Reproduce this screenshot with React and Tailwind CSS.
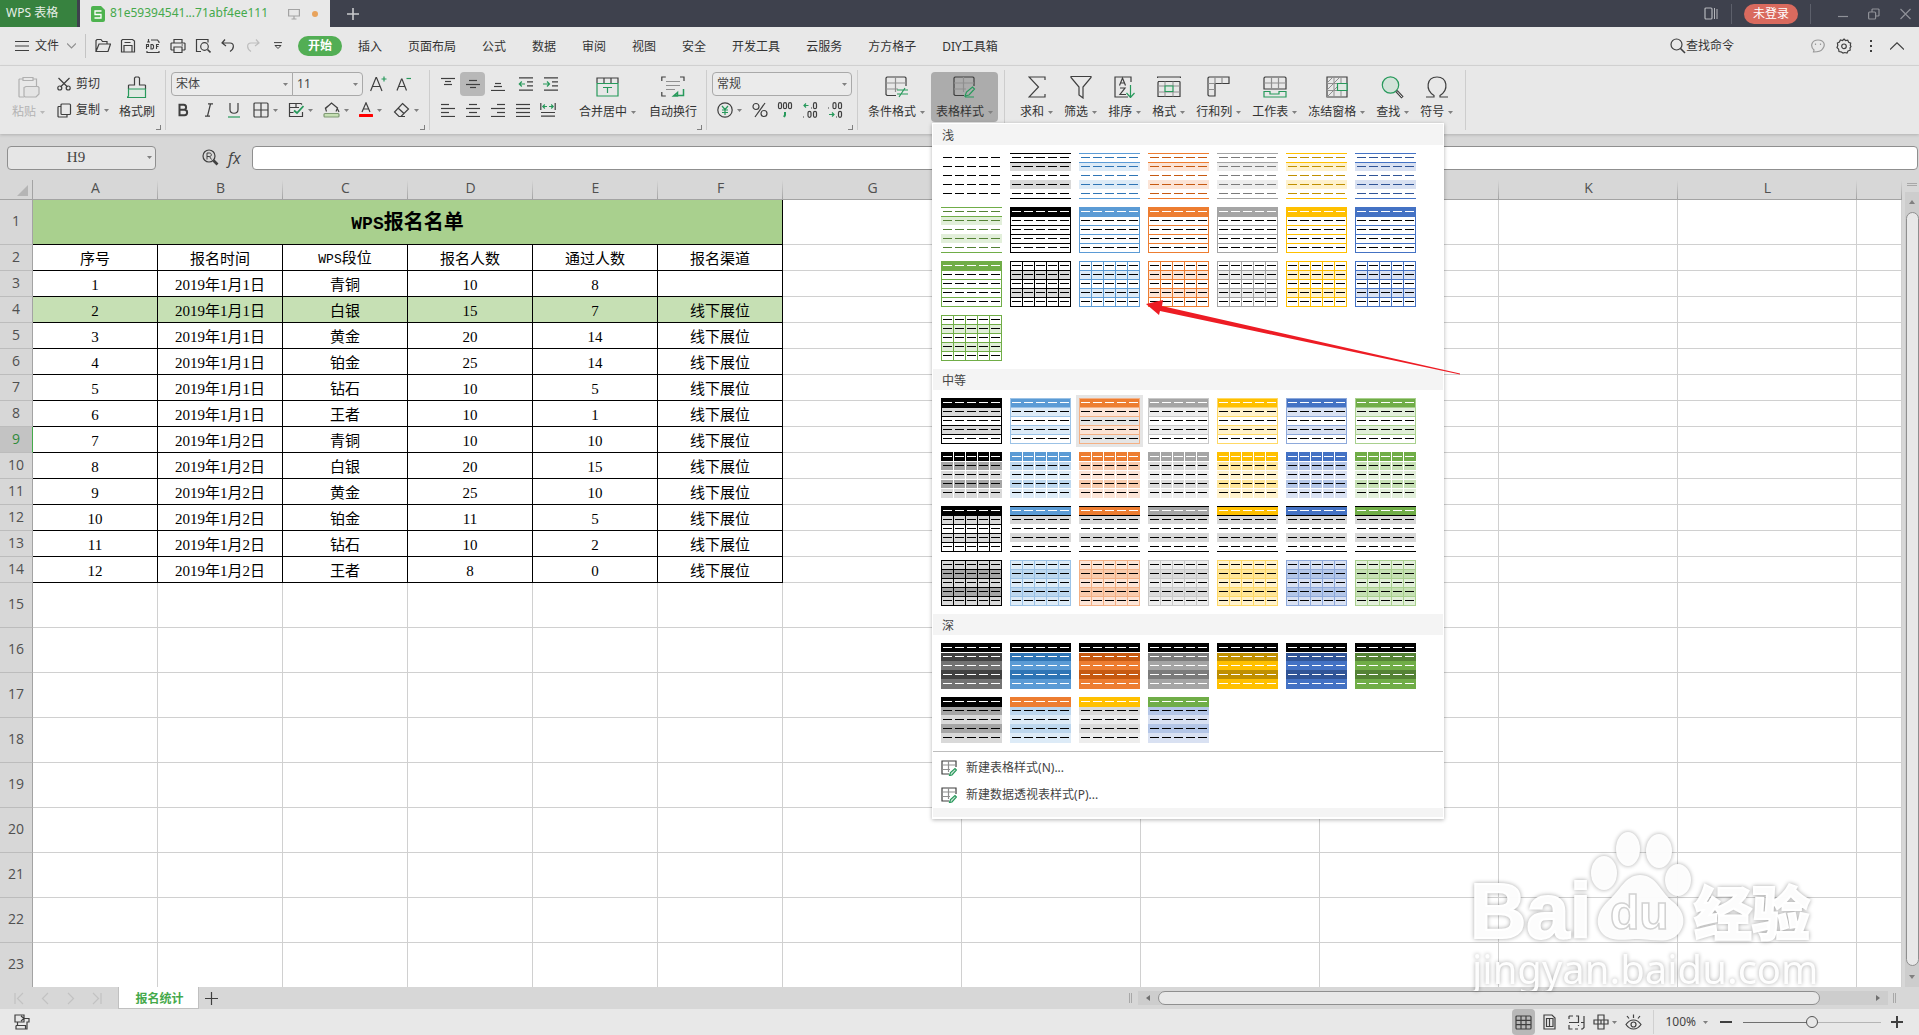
import { Fragment } from "react";

/* ─────────────────────────────────────────────
   DATA
───────────────────────────────────────────── */
const MENUS = ["插入", "页面布局", "公式", "数据", "审阅", "视图", "安全", "开发工具", "云服务", "方方格子", "DIY工具箱"];

const COLUMNS = ["A", "B", "C", "D", "E", "F", "G", "H", "I", "J", "K", "L", ""];

const LEVELS = ["青铜", "白银", "黄金", "铂金", "钻石", "王者"];
const SIGNED = [10, 15, 20, 25, 10, 10, 10, 20, 25, 11, 10, 8];
const PASSED = [8, 7, 14, 14, 5, 1, 10, 15, 10, 5, 2, 0];

const ENTRIES = SIGNED.map((signed, i) => [
  i + 1,
  i < 6 ? "2019年1月1日" : "2019年1月2日",
  LEVELS[i % 6],
  signed,
  PASSED[i],
  i === 0 ? "" : "线下展位",
]);

const EMPTY_ROWS = [15, 16, 17, 18, 19, 20, 21, 22, 23];

// Theme colours, each with its tints for the style gallery
const BLACK = { base: "#000000", light: "#d9d9d9", mid: "#a6a6a6", line: "#000000", dark: "#000000" };
const BLUE = { base: "#5b9bd5", light: "#ddebf7", mid: "#bdd7ee", line: "#9bc2e6", dark: "#2f75b5" };
const ORANGE = { base: "#ed7d31", light: "#fce4d6", mid: "#f8cbad", line: "#f4b084", dark: "#c65911" };
const GRAY = { base: "#a5a5a5", light: "#ededed", mid: "#dbdbdb", line: "#c9c9c9", dark: "#7b7b7b" };
const GOLD = { base: "#ffc000", light: "#fff2cc", mid: "#ffe699", line: "#ffd966", dark: "#bf8f00" };
const INDIGO = { base: "#4472c4", light: "#d9e1f2", mid: "#b4c6e7", line: "#8ea9db", dark: "#305496" };
const GREEN = { base: "#70ad47", light: "#e2efda", mid: "#c6e0b4", line: "#a9d08e", dark: "#548235" };
const THEME = [BLACK, BLUE, ORANGE, GRAY, GOLD, INDIGO, GREEN];

const N = "none";
const INNER = [9, 18, 27, 36];

const lightStyles = [
  { fills: [N, N, N, N, N], dash: "#000" },
  ...THEME.map((c) => ({ fills: [N, c.light, N, c.light, N], lines: [0, 9, 45], line: c.base, dash: c.dark })),
  ...THEME.map((c) => ({ fills: [c.base, N, N, N, N], lines: INNER, line: c.base, box: true, head: "#fff" })),
  ...THEME.map((c) => ({ fills: [N, c.light, N, c.light, N], lines: INNER, line: c.base, box: true, grid: true })),
];

const mediumStyles = [
  ...THEME.map((c) => ({
    fills: [c.base, c.light, N, c.light, N], lines: INNER, line: c.line, box: true, head: "#fff", active: c === ORANGE,
  })),
  ...THEME.map((c) => ({ fills: [c.base, c.mid, c.light, c.mid, c.light], lines: INNER, line: "#fff", grid: true, head: "#fff" })),
  { fills: ["#000", "#d9d9d9", N, "#d9d9d9", N], lines: INNER, line: "#000", box: true, grid: true, head: "#fff" },
  ...THEME.slice(1).map((c) => ({ fills: [c.base, "#d9d9d9", N, "#d9d9d9", N], lines: [0, 9, 45], line: "#000", head: "#fff" })),
  ...THEME.map((c) => ({ fills: [c.light, c.mid, c.light, c.mid, c.light], lines: INNER, line: c.line, box: true, grid: true })),
];

const darkStyles = [
  { fills: ["#000", "#404040", "#737373", "#404040", "#737373"], lines: [9], line: "#fff", head: "#fff", dash: "#fff" },
  ...THEME.slice(1).map((c) => ({
    fills: ["#000", c.dark, c.base, c.dark, c.base], lines: [9], line: "#fff", head: "#fff", dash: "#fff",
  })),
  ...[[BLACK, BLACK], [ORANGE, BLUE], [GOLD, GRAY], [GREEN, INDIGO]].map(([h, c]) => ({
    fills: [h.base, c.mid, c.light, c.mid, c.light], lines: [9], line: h.base, head: "#fff",
  })),
];

/* ─────────────────────────────────────────────
   SMALL SHARED PIECES
───────────────────────────────────────────── */
function Ico({ w = 16, h = 16, children, color = "#3f3f3f" }) {
  return (
    <svg width={w} height={h} viewBox={`0 0 ${w} ${h}`} fill="none" stroke={color} strokeWidth="1.2" className="shrink-0" aria-hidden="true">
      {children}
    </svg>
  );
}

function Caret({ faded = false }) {
  return (
    <svg width="5" height="3" viewBox="0 0 5 3" className="shrink-0" aria-hidden="true">
      <path d="M0 0h5L2.5 3z" fill={faded ? "#b8b8b8" : "#808080"} />
    </svg>
  );
}

function Divider() {
  return <div className="my-1 w-px shrink-0 bg-[#cdcdcd]" />;
}

// Little "more options" angle in the corner of a ribbon group
function Corner({ label }) {
  return (
    <button aria-label={label} className="absolute bottom-1 right-1 h-[5px] w-[5px] border-b border-r border-[#808080]" />
  );
}

function BigButton({ icon, label, caret = true, faded = false }) {
  return (
    <button className={`flex shrink-0 flex-col items-center ${faded ? "text-[#b3b3b3]" : ""}`}>
      <span className="flex h-[30px] items-center">{icon}</span>
      <span className="flex h-5 items-center gap-1 whitespace-nowrap text-xs">
        {label}
        {caret && <Caret faded={faded} />}
      </span>
    </button>
  );
}

function IconButton({ label, children, active = false, wide = false }) {
  return (
    <button
      aria-label={label}
      className={`flex h-6 items-center justify-center gap-1 ${wide ? "w-[35px]" : "w-[25px]"} ${active ? "rounded bg-[#b8b8b8]" : ""}`}
    >
      {children}
      {wide && <Caret />}
    </button>
  );
}

/* ─────────────────────────────────────────────
   TITLE BAR
───────────────────────────────────────────── */
function TitleBar() {
  return (
    <header className="flex h-[27px] shrink-0 items-stretch bg-[#3e414d] text-xs">
      <button className="mr-[3px] w-[77px] shrink-0 bg-[#37823f] pb-px pl-1.5 text-left text-[#e6efe7]">WPS 表格</button>
      <div className="flex w-[250px] shrink-0 items-center bg-[#e8e8e8] pl-[11px] text-[#45a94b]">
        <svg width="14" height="16" viewBox="0 0 14 16" className="mr-[5px]" aria-hidden="true">
          <path d="M2 0h8l4 4v10a2 2 0 0 1-2 2H2a2 2 0 0 1-2-2V2a2 2 0 0 1 2-2z" fill="#4db34f" />
          <path d="M10.500 5H4v3.500h6V12H3.500" fill="none" stroke="#fff" strokeWidth="1.300" />
        </svg>
        <span className="w-[178px] pb-px">81e59394541...71abf4ee111</span>
        <Ico w={12} h={12} color="#a3a3a3">
          <path d="M.6 1.500h10.800v6.500H.6zM6 8v3M3.500 11h5" />
        </Ico>
        <span className="ml-3 h-1.5 w-1.5 rounded-full bg-[#e8a35c]" />
      </div>
      <button aria-label="新建标签" className="ml-[17px]">
        <Ico w={12} h={12} color="#c9cacd"><path d="M6 0v12M0 6h12" strokeWidth="1.600" /></Ico>
      </button>

      {/* Window controls */}
      <div className="ml-auto flex items-center pr-2">
        <button aria-label="侧栏">
          <Ico w={14} h={13} color="#b4b6bb"><rect x="1" y="1" width="7" height="11" rx="1" /><path d="M10.500 1v11M13 2v10" strokeWidth="1" /></Ico>
        </button>
        <span className="ml-[13px] h-5 w-px bg-[#5d606b]" />
        <button className="ml-3 h-5 w-[54px] rounded-full bg-[#d96a5e] text-white">未登录</button>
        <span className="ml-3 h-5 w-px bg-[#5d606b]" />
        <button aria-label="最小化" className="ml-[27px]"><Ico w={10} h={12} color="#8f9198"><path d="M0 8.500h10" /></Ico></button>
        <button aria-label="还原" className="ml-5">
          <Ico w={12} h={12} color="#8f9198"><rect x=".6" y="4" width="7" height="7" rx="1" /><path d="M4 4V1.600L4.600 1H10.400l.6.6v5.800l-.6.6H8" /></Ico>
        </button>
        <button aria-label="关闭" className="ml-5"><Ico w={11} h={12} color="#8f9198"><path d="M.5 1l10 10M10.500 1l-10 10" /></Ico></button>
      </div>
    </header>
  );
}

/* ─────────────────────────────────────────────
   MENU BAR
───────────────────────────────────────────── */
const QUICK = [
  ["打开", <path d="M1 13V2.500L2 1.500h4l1.500 2H12v2.500M1 13.500L4 6h11.500L13 13.500z" />],
  ["保存", <path d="M2.500 1.500h10L14.500 3v11H1.500V2.500zM4 14V7.500h8V14M4.500 4.500h6" />],
  ["输出为PDF", <Fragment><path d="M2 4h3M3.500 1v3M6 2h6.500L14 4v1M2 13v1.500h12V13" /><path d="M1.500 11V6.500h2v2h-2M6 6.500v4.500h1.500l1-1V7.500l-1-1zM11.500 11V6.500H14M11.500 8.500h2" strokeWidth="1.100" /></Fragment>],
  ["打印", <path d="M4 5V1.500h8V5M3.500 12H1.500L1 11.500V5.500L1.500 5h13l.5.5v6l-.5.5h-2M4 9h8v5.500H4zM11.500 7h1.500" />],
  ["打印预览", <Fragment><path d="M6 13.500H1.500v-12h11.500v3" /><circle cx="9.500" cy="8.500" r="3.800" /><path d="M12.500 11.500l3 3" strokeWidth="1.600" /></Fragment>],
  ["撤销", <path d="M5 1.500L2 5l4 3M2.500 5H10c4.500 0 4.500 6 0 8.500" />],
];

function MenuBar() {
  return (
    <nav className="flex h-[39px] shrink-0 items-center border-b border-[#d6d6d6] bg-[#e8e8e8] text-xs">
      <button className="flex items-center pl-[15px]">
        <Ico w={14} h={12}><path d="M0 1.500h14M0 6h14M0 10.500h14" /></Ico>
        <span className="ml-1.5 w-8 text-left">文件</span>
        <Ico w={9} h={6} color="#8f8f8f"><path d="M0 .5l4.500 4.500L9 .5" /></Ico>
      </button>
      <span className="ml-[9px] mr-1 h-6 w-px bg-[#c4c4c4]" />
      {QUICK.map(([label, shape]) => (
        <IconButton key={label} label={label}><Ico>{shape}</Ico></IconButton>
      ))}
      <IconButton label="恢复"><Ico color="#bdbdbd"><path d="M11 1.500L14 5l-4 3M13.500 5H6c-4.500 0-4.500 6 0 8.500" /></Ico></IconButton>
      <IconButton label="自定义快速访问工具栏"><Ico w={8} h={8}><path d="M0 .6h8M1 3.500h6L4 6.500z" strokeWidth="1" /></Ico></IconButton>

      <button className="ml-2 mr-[3px] h-5 w-11 rounded-full bg-[#52ae54] font-bold text-white">开始</button>
      {MENUS.map((m) => (
        <button key={m} className="shrink-0 whitespace-nowrap px-[13px] pt-0.5 text-[#333]">{m}</button>
      ))}

      <div className="ml-auto flex shrink-0 items-center pr-[15px]">
        <button className="mr-[77px] flex items-center">
          <Ico><circle cx="6.500" cy="6.500" r="5.500" /><path d="M10.500 10.500l4.500 4.500" strokeWidth="1.600" /></Ico>
          查找命令
        </button>
        <button aria-label="反馈"><Ico w={14} h={14} color="#9a9a9a"><path d="M2.500 13l.5-2C-1.500 7 1 1 7 1s8 5 4.500 9C10 12.500 6 13 2.500 13z" /><path d="M4.500 4.500v1.500M9.500 4.500v1.500" /></Ico></button>
        <button aria-label="设置" className="ml-[11px]">
          <Ico>
            <path d="M8 1l1.500 1.500 2.200-.3 1 2 2 1-.4 2.200L15 8.500l-1 1.500.2 2.200-2.200.8-1 2-2.200-.5L7 15l-2-1.200L3 13.500l-.4-2.300L1 9.500l.8-2L1.400 5l2-1 1-2 2.200.5z" />
            <circle cx="8" cy="8.300" r="2.300" />
          </Ico>
        </button>
        <button aria-label="更多" className="ml-[17px]"><Ico w={4} h={12}><path d="M1 1h2M1 6h2M1 11h2" strokeWidth="2" /></Ico></button>
        <button aria-label="收起功能区" className="ml-[17px]"><Ico w={14} h={8}><path d="M0 7.500L7 .8l7 6.700" /></Ico></button>
      </div>
    </nav>
  );
}

/* ─────────────────────────────────────────────
   RIBBON
───────────────────────────────────────────── */
const G = "#27995b";

// Horizontal text-line glyphs used by the alignment buttons: [x, y, width]
function Lines({ items }) {
  return (
    <Ico w={16} h={14}>
      {items.map(([x, y, w]) => <path key={y} d={`M${x} ${y + 0.5}h${w}`} />)}
    </Ico>
  );
}

function SelectBox({ label, value, className }) {
  return (
    <div className={`relative flex h-6 items-center border border-[#a9a9a9] bg-[#ebebeb] ${className}`}>
      <select aria-label={label} defaultValue={value} className="h-full w-full appearance-none bg-transparent pl-1 text-xs text-[#444] outline-none">
        <option>{value}</option>
      </select>
      <span className="pointer-events-none absolute right-1 flex"><Caret /></span>
    </div>
  );
}

function ClipboardGroup() {
  return (
    <div className="relative flex shrink-0 pl-3 pr-[10px] pt-1.5">
      <BigButton
        faded
        label="粘贴"
        icon={<Ico w={22} h={22} color="#b0b0b0"><path d="M5 3H1.500L1 3.500v17l.5.500H6M15 3h3.500v7M5 1.500h10v3H5z" /><path d="M8 10.500h12l1 1V18l-3 3H7l-1-1v-8.500z" fill="#e4e4e4" /></Ico>}
      />
      <div className="ml-3 flex w-[52px] flex-col gap-0.5">
        <button className="flex h-6 items-center gap-1 text-xs">
          <Ico w={15} h={14}><path d="M1.500 1l9 9M12.500 1l-9 9" /><circle cx="2.800" cy="11" r="2" /><circle cx="11.200" cy="11" r="2" /></Ico>剪切
        </button>
        <button className="flex h-6 items-center gap-1 text-xs">
          <Ico w={15} h={15}><rect x="4" y="1" width="9.500" height="10.500" rx="1" /><path d="M4 3.500H1.500L1 4v9.500l.5.500H10v-2.500" /></Ico>复制<Caret />
        </button>
      </div>
      <div className="ml-[10px]">
        <BigButton
          caret={false}
          label="格式刷"
          icon={<Ico w={20} h={23}><path d="M1.500 13V9.500l.5-.5h5.500V2l1-1h3l1 1v7H18l.5.500V13" /><path d="M1.500 13h17v8.500H0L1.500 20z" stroke={G} fill="#dfe9e2" /></Ico>}
        />
      </div>
      <Corner label="剪贴板选项" />
    </div>
  );
}

function FontGroup() {
  return (
    <div className="relative flex shrink-0 flex-col gap-0.5 pl-[5px] pt-1.5">
      <div className="flex items-center">
        <SelectBox label="字体" value="宋体" className="w-[122px] rounded-l" />
        <SelectBox label="字号" value="11" className="-ml-px w-[71px] rounded-r" />
        <button aria-label="增大字号" className="ml-[7px]">
          <Ico w={17} h={16}><path d="M.6 15L6 1.500h.5L12 15M2.500 10.500h7.500" /><path d="M14 .5v5M11.500 3h5" stroke={G} /></Ico>
        </button>
        <button aria-label="减小字号" className="ml-[9px]">
          <Ico w={16} h={16}><path d="M1 14.500L5.500 3H6l4.500 11.500M2.500 10.500h6.500" /><path d="M10.500 2.500H15" stroke={G} /></Ico>
        </button>
      </div>
      <div className="flex w-[258px]">
        <IconButton label="加粗"><Ico w={13} h={14}><path d="M2.500 1.800h4.200c3.200 0 3.200 5 0 5H2.500zM2.500 6.800h5c3.500 0 3.500 5.400 0 5.400h-5z" strokeWidth="2" /></Ico></IconButton>
        <IconButton label="倾斜"><Ico w={10} h={14}><path d="M4 .8h5M1 13.200h5M6.500 1L3.500 13" /></Ico></IconButton>
        <IconButton label="下划线"><Ico w={12} h={15}><path d="M2 0v6.500c0 5 8 5 8 0V0" /><path d="M0 14h12" stroke={G} /></Ico></IconButton>
        <span className="w-0.5" />
        <IconButton wide label="边框"><Ico><rect x="1" y="1" width="14" height="14" rx="1" /><path d="M8 1v14M1 8h14" /></Ico></IconButton>
        <IconButton wide label="绘图边框"><Ico><path d="M14 2.500L13 1.500H1.500v13h13V10M1.500 5.500H11M1.500 10.500h4M8 1.500v4" /><path d="M6 8.500L9 11l6.500-7" stroke={G} strokeWidth="1.800" /></Ico></IconButton>
        <IconButton wide label="填充颜色"><Ico w={17}><path d="M3.500 9.500L2.500 6.500 8.500 1l6 5-1.500 3.500M2 6.500L5 4M14.500 7l1.500 3" /><rect x="1" y="11.500" width="15" height="3.500" rx="1" fill="#c6e0b4" stroke="#7f9a74" /></Ico></IconButton>
        <IconButton wide label="字体颜色"><Ico w={14}><path d="M3 10L7 .8 11 10M4.500 7h5" /><path d="M1 13.500h12" stroke="#f00" strokeWidth="3" strokeLinecap="round" /></Ico></IconButton>
        <IconButton wide label="清除"><Ico w={17}><path d="M9.500 1.500L15.500 7 8 14.500H6L1.500 10zM5 6l6 5.500M8 14.500h4" /></Ico></IconButton>
      </div>
      <Corner label="字体选项" />
    </div>
  );
}

function AlignGroup() {
  return (
    <div className="relative flex shrink-0 pl-[5px] pr-[9px] pt-1.5">
      <div className="flex w-[128px] flex-col gap-0.5">
        <div className="flex">
          <IconButton label="顶端对齐"><Lines items={[[1, 1, 14], [5, 4, 6], [4, 7, 8]]} /></IconButton>
          <IconButton label="垂直居中" active><Lines items={[[4, 3, 8], [1, 7, 14], [5, 10, 6]]} /></IconButton>
          <IconButton label="底端对齐"><Lines items={[[5, 6, 6], [4, 9, 8], [1, 13, 14]]} /></IconButton>
          <span className="w-[3px]" />
          <IconButton label="减少缩进">
            <Ico w={15} h={14}><path d="M1 .8h14M9 4.800h6M9 8.800h6M1 13.200h14" /><path d="M7 7H1.500M3.800 4.500L1.300 7l2.500 2.500" stroke={G} /></Ico>
          </IconButton>
          <IconButton label="增加缩进">
            <Ico w={15} h={14}><path d="M1 .8h14M9 4.800h6M9 8.800h6M1 13.200h14" /><path d="M0 7h6M4 4.500L6.500 7 4 9.500" stroke={G} /></Ico>
          </IconButton>
        </div>
        <div className="flex">
          <IconButton label="左对齐"><Lines items={[[1, 1, 8], [1, 5, 14], [1, 9, 8], [1, 13, 14]]} /></IconButton>
          <IconButton label="水平居中"><Lines items={[[4, 1, 8], [1, 5, 14], [4, 9, 8], [1, 13, 14]]} /></IconButton>
          <IconButton label="右对齐"><Lines items={[[7, 1, 8], [1, 5, 14], [7, 9, 8], [1, 13, 14]]} /></IconButton>
          <IconButton label="两端对齐"><Lines items={[[1, 1, 14], [1, 5, 14], [1, 9, 14], [1, 13, 14]]} /></IconButton>
          <IconButton label="分散对齐">
            <Ico w={16} h={14}><path d="M.8 0v7M15.200 0v7M1 9.500h14M1 13.200h14" /><path d="M7 3.500H3M4.800 1.500l-2 2 2 2M9 3.500h4M11.200 1.500l2 2-2 2" stroke={G} /></Ico>
          </IconButton>
        </div>
      </div>
      <div className="ml-[16px]">
        <BigButton
          label="合并居中"
          icon={<Ico w={23} h={20}><path d="M1 6V1h21v5M8 1v5M15 1v5" /><path d="M1 6.500h21V19H1zM7 10.500h9M11.500 10.500V16" stroke={G} /></Ico>}
        />
      </div>
      <div className="ml-[13px]">
        <BigButton
          caret={false}
          label="自动换行"
          icon={<Ico w={24} h={22}><path d="M.8 5V1h4M19 1h4v4M.8 16v4h4" /><path d="M5 5.500h14M5 9.500h14M5 13.500h9" stroke="#8f8f8f" /><path d="M22.500 13v6.500h-8M16.500 16.500l-4 3.500h4z" stroke={G} strokeWidth="1.500" /></Ico>}
        />
      </div>
      <Corner label="对齐选项" />
    </div>
  );
}

function NumberGroup() {
  return (
    <div className="relative flex shrink-0 flex-col gap-0.5 px-[5px] pt-1.5">
      <SelectBox label="数字格式" value="常规" className="w-[140px] rounded" />
      <div className="flex">
        <IconButton wide label="货币"><Ico><circle cx="8" cy="8" r="7.200" /><path d="M5 4l3 3.500L11 4M8 7.500V13M5 8h6M5 10.500h6" stroke={G} /></Ico></IconButton>
        <IconButton label="百分比"><Ico><circle cx="4" cy="4.500" r="3" /><circle cx="12" cy="11.500" r="3" /><path d="M13 1L3 15" /></Ico></IconButton>
        <IconButton label="千位分隔">
          <Ico>
            <rect x="1.500" y=".7" width="3" height="6" rx="1.500" /><rect x="6.500" y=".7" width="3" height="6" rx="1.500" /><rect x="11.500" y=".7" width="3" height="6" rx="1.500" />
            <path d="M8 10v3l-1 2" stroke={G} strokeWidth="2" />
          </Ico>
        </IconButton>
        <IconButton label="增加小数位">
          <Ico>
            <path d="M6.500 3.500H2M4 1.500l-2 2 2 2" stroke={G} /><path d="M9 6h1M1 15h1" />
            <rect x="11.500" y=".7" width="3" height="6" rx="1.500" /><rect x="6" y="9.300" width="3" height="6" rx="1.500" /><rect x="11.500" y="9.300" width="3" height="6" rx="1.500" />
          </Ico>
        </IconButton>
        <IconButton label="减少小数位">
          <Ico>
            <path d="M2 12.500h5M5 10.500l2 2-2 2" stroke={G} /><path d="M1 6h1M9 15h1" />
            <rect x="6" y=".7" width="3" height="6" rx="1.500" /><rect x="11.500" y=".7" width="3" height="6" rx="1.500" /><rect x="11.500" y="9.300" width="3" height="6" rx="1.500" />
          </Ico>
        </IconButton>
      </div>
      <Corner label="数字选项" />
    </div>
  );
}

const TOOLS = [
  ["求和", <Ico w={18} h={22}><path d="M17 4V1H1l9.500 10L1 21h16v-3" /></Ico>],
  ["筛选", <Ico w={22} h={24}><path d="M1 1.500h20v1L13 12v11l-4-3v-8L1 2.500z" /></Ico>],
  ["排序", <Ico w={21} h={22}><path d="M17 6V1H1v20h13" /><path d="M5.500 9.500L8.500 2l3 7.500M6.500 7h4M6 12h5l-5 6.500h6" /><path d="M16.500 9v12M12.500 17l4 4.500 4-4.500" stroke={G} /></Ico>],
  ["格式", <Ico w={24} h={22}><path d="M.5 2V1h23v1" /><path d="M1 6.500L1.500 5.500h21l.5.500V20.500H1z" /><path d="M1 10h22M1 16h22M8 5.500V10M16 5.500V10M8 16v4.500M16 16v4.500" stroke="#8f8f8f" strokeWidth="1" /><path d="M8 10h8v5.500H8z" stroke={G} fill="#dfe9e2" /></Ico>],
  ["行和列", <Ico w={23} h={22}><path d="M1 2l1-1h20v6.500H8V20H2l-1-1z" /><path d="M8 1v6.500H1M15 1v6.500M1 13.500h7" stroke="#8f8f8f" /></Ico>],
  ["工作表", <Ico w={24} h={22}><path d="M1 13V2l1-1h20l1 1v11z" /><path d="M1 7h22M8.500 1v12M15.500 1v12" stroke="#8f8f8f" /><path d="M1 15.500h6V18h9v-2.500h7V21H1z" stroke={G} /></Ico>],
  ["冻结窗格", <Ico w={22} h={22}><path d="M1 1h20v20H1z" /><path d="M8 1v20M15 1v20M1 7.500h20M1 14.500h20M1 7L7 1M1 14L14 1M1 21L11 11" stroke="#8f8f8f" strokeWidth="1" /><path d="M11.500 7.500H21v7h-9.500z" stroke={G} fill="#dfe9e2" /></Ico>],
  ["查找", <Ico w={23} h={23}><circle cx="9.500" cy="9" r="8.200" stroke={G} fill="#d2e3d9" /><path d="M15.500 15l6 6.500" strokeWidth="3" /><path d="M16 15.500l5 5.500" stroke="#e8e8e8" strokeWidth="1" /></Ico>],
  ["符号", <Ico w={22} h={22}><path d="M0 21h8v-1.500C-1 14 .5 1 11 1s12 13 3 18.500V21h8" /></Ico>],
];

const TABLE_SHAPE = (
  <Fragment>
    <path d="M11 19.500H2l-1-1V2l1-1h18l1 1v8" />
    <path d="M1 7h20M1 13h12M10.500 1v15" stroke="#8f8f8f" />
  </Fragment>
);

function Ribbon() {
  return (
    <div className="relative z-10 flex h-[68px] shrink-0 bg-[#e8e8e8] text-[#333] shadow-[0_1px_3px_rgba(0,0,0,0.18)]">
      <ClipboardGroup />
      <Divider />
      <FontGroup />
      <Divider />
      <AlignGroup />
      <Divider />
      <NumberGroup />
      <Divider />
      <div className="flex shrink-0 pl-[10px] pr-1.5 pt-1.5">
        <BigButton label="条件格式" icon={<Ico w={23} h={22}>{TABLE_SHAPE}<path d="M12 14h11M12 18h11M20 12l-6 9" stroke={G} /></Ico>} />
        {/* Open drop-down: table style gallery */}
        <div className="relative ml-1.5 h-[50px] rounded bg-[#acacac] px-[5px]">
          <BigButton label="表格样式" icon={<Ico w={23} h={22}>{TABLE_SHAPE}<path d="M12 21h9M12 20l1.500-4 6-5 2 2-5.500 6z" stroke={G} /></Ico>} />
          <StyleGallery />
        </div>
      </div>
      <Divider />
      <div className="flex gap-[11px] pl-[15px] pr-3 pt-1.5">
        {TOOLS.map(([label, icon]) => <BigButton key={label} label={label} icon={icon} />)}
      </div>
      <Divider />
    </div>
  );
}

/* ─────────────────────────────────────────────
   TABLE STYLE GALLERY
   Every sample is a 5 x 5 mini table
───────────────────────────────────────────── */
function StyleSample({ fills, lines = [], line, grid, box, head, dash = "#000" }) {
  return (
    <svg width="61" height="46" viewBox="0 0 61 46" shapeRendering="crispEdges" className="block" aria-hidden="true">
      {fills.map((f, i) => <rect key={i} x="0" y={i * 9} width="61" height={i === 4 ? 10 : 9} fill={f} />)}
      {lines.map((y) => <rect key={y} x="0" y={y} width="61" height="1" fill={line} />)}
      {grid && [12, 24, 36, 48].map((x) => <rect key={x} x={x} y="0" width="1" height="46" fill={line} />)}
      {box && <path d="M0 0h61v46H0zM1 1v44h59V1z" fillRule="evenodd" fill={line} />}
      {fills.map((_, r) => (
        <path key={r} d={`M2 ${r * 9 + 4}h9v1h-9zm12 0h9v1h-9zm12 0h9v1h-9zm12 0h9v1h-9zm12 0h9v1h-9z`} fill={r === 0 && head ? head : dash} />
      ))}
    </svg>
  );
}

function GallerySection({ title, styles }) {
  return (
    <section>
      <h3 className="h-[21px] bg-[#f4f4f4] pl-[9px] text-xs leading-6">{title}</h3>
      <div className="grid w-max grid-cols-7 gap-2 p-2">
        {styles.map((s, i) => (
          <button key={i} aria-label={`${title} ${i + 1}`} className={s.active ? "bg-[#e5e5e5] ring-3 ring-[#e5e5e5]" : ""}>
            <StyleSample {...s} />
          </button>
        ))}
      </div>
    </section>
  );
}

function StyleGallery() {
  return (
    <div className="absolute left-px top-[51px] w-[512px] border border-white bg-white pb-px text-[#444] shadow-[0_1px_4px_rgba(0,0,0,0.3)]">
      <GallerySection title="浅" styles={lightStyles} />
      <GallerySection title="中等" styles={mediumStyles} />
      <GallerySection title="深" styles={darkStyles} />
      <div className="border-t border-[#bdbdbd] pb-0.5 text-xs">
        {["新建表格样式(N)...", "新建数据透视表样式(P)..."].map((t) => (
          <button key={t} className="flex h-[27px] w-full items-center gap-[9px] px-2 pt-1">
            <Ico><path d="M8 14H1V1h14v6" /><path d="M1 5h14M1 9.500h8M7.500 1v11" stroke="#8f8f8f" /><path d="M8.500 15.500l1-3 4.500-4 1.500 1.500-4.500 5z" stroke={G} fill="#cfe3d7" /></Ico>
            {t}
          </button>
        ))}
      </div>
      <div className="h-[9px] bg-[#f4f4f4]" />
    </div>
  );
}

/* ─────────────────────────────────────────────
   FORMULA BAR
───────────────────────────────────────────── */
function FormulaBar() {
  return (
    <div className="flex h-[46px] shrink-0 items-center bg-[#d7d7d7] pl-[7px] pr-px pt-px">
      <div className="relative flex h-6 w-[149px] shrink-0 items-center rounded border border-[#8f8f8f] bg-[#e6e6e6]">
        <input aria-label="名称框" defaultValue="H9" className="w-full bg-transparent pr-[11px] text-center font-['Liberation_Serif',serif] text-[15px] text-[#444] outline-none" />
        <span className="absolute right-[3px] flex"><Caret /></span>
      </div>
      <button aria-label="浏览公式结果" className="ml-[46px]">
        <Ico w={17} h={17}><circle cx="7" cy="7" r="6" /><path d="M5 10.500V4h2.500c2.500 0 2.500 3.500 0 3.500H5M7.500 7.500l2 3" strokeWidth="1" /><path d="M11.500 11.500l4 4" strokeWidth="2.600" /></Ico>
      </button>
      <button className="ml-[9px] w-6 text-left font-['Open_Sans','Noto_Sans',sans-serif] text-base italic leading-5 text-[#444]">fx</button>
      <input aria-label="编辑栏" className="h-6 min-w-0 flex-1 rounded border border-[#8f8f8f] bg-white px-2 outline-none" />
    </div>
  );
}

/* ─────────────────────────────────────────────
   SHEET
───────────────────────────────────────────── */
const UI_DIGITS = "font-['Open_Sans','Noto_Sans',sans-serif] text-sm font-normal";
const GRAY_CELL = "border-b border-r border-[#d0d0d0]";

function RowHeader({ n, active = false }) {
  return (
    <th scope="row" className={`border-b border-r border-b-[#bcbcbc] p-0 pb-0.5 leading-5 ${UI_DIGITS} ${active ? "border-r-[#45a94b] bg-[#c3c3c3] text-[#2f8a3a]" : "border-r-[#a3a3a3] bg-[#d7d7d7] text-[#505050]"}`}>
      {n}
    </th>
  );
}

function BlankCells({ count }) {
  return Array.from({ length: count }, (_, i) => <td key={i} className={GRAY_CELL} />);
}

function Sheet() {
  const cell = "border-b border-r border-black p-0 pt-0.5 text-center";
  return (
    <table className="w-full table-fixed border-separate border-spacing-0 bg-white font-['Liberation_Serif','Noto_Sans_CJK_SC',serif] text-[15px] leading-5 text-black">
      <colgroup>
        <col className="w-[33px]" />
        {COLUMNS.map((c, i) => <col key={i} className={i < 6 ? "w-[125px]" : i < 12 ? "w-[179px]" : ""} />)}
      </colgroup>
      <thead>
        <tr className="h-5 bg-[#d7d7d7]">
          <td className="border-b border-r border-[#a3a3a3] p-0 pr-1 pb-[3px] align-bottom">
            <svg width="11" height="11" viewBox="0 0 11 11" className="ml-auto block" aria-hidden="true"><path d="M11 0v11H0z" fill="#b5b5b5" /></svg>
          </td>
          {COLUMNS.map((c, i) => (
            <th key={i} scope="col" className={`h-5 border-b border-[#a3a3a3] bg-[linear-gradient(#d7d7d7,#a3a3a3)] bg-[length:1px_100%] bg-right bg-no-repeat p-0 pb-[3px] text-[#505050] ${UI_DIGITS} leading-4`}>
              {c}
            </th>
          ))}
        </tr>
      </thead>
      <tbody>
        <tr className="h-[45px]">
          <RowHeader n={1} />
          <td colSpan={6} className={`${cell} bg-[#a9d08e] text-xl font-bold`}>
            <span className="font-['Liberation_Mono',monospace] text-lg">WPS</span>报名名单
          </td>
          <BlankCells count={7} />
        </tr>
        <tr className="h-[26px]">
          <RowHeader n={2} />
          <td className={cell}>序号</td>
          <td className={cell}>报名时间</td>
          <td className={cell}><span className="font-['Liberation_Mono',monospace] text-[13px]">WPS</span>段位</td>
          <td className={cell}>报名人数</td>
          <td className={cell}>通过人数</td>
          <td className={cell}>报名渠道</td>
          <BlankCells count={7} />
        </tr>
        {ENTRIES.map((row, r) => (
          <tr key={r} className="h-[26px]">
            <RowHeader n={r + 3} active={r + 3 === 9} />
            {row.map((v, c) => <td key={c} className={`${cell} ${r === 1 ? "bg-[#c6e0b4]" : ""}`}>{v}</td>)}
            <BlankCells count={7} />
          </tr>
        ))}
        {EMPTY_ROWS.map((n) => (
          <tr key={n} className="h-[45px]">
            <RowHeader n={n} />
            <BlankCells count={13} />
          </tr>
        ))}
      </tbody>
    </table>
  );
}

function VerticalScroll() {
  return (
    <div className="flex w-[17px] shrink-0 flex-col items-center bg-[#d7d7d7] pl-[3px]">
      <span className="mt-[3px] h-[3px] w-[10px] border-y border-[#a8a8a8]" />
      <div className="mt-1.5 flex w-full flex-1 flex-col items-center bg-[#cdcdcd]">
        <button aria-label="向上滚动" className="flex h-5 items-center"><Ico w={6} h={4} color="none"><path d="M0 4h6L3 0z" fill="#808080" /></Ico></button>
        <div className="w-[13px] flex-1 rounded-full border border-[#8f8f8f] bg-[#e8e8e8]" />
        <button aria-label="向下滚动" className="flex h-[21px] items-center"><Ico w={6} h={4} color="none"><path d="M0 0h6L3 4z" fill="#808080" /></Ico></button>
      </div>
    </div>
  );
}

/* ─────────────────────────────────────────────
   SHEET TABS + STATUS BAR
───────────────────────────────────────────── */
const NAV = [
  ["第一张", "M1 1v11M9 1L3.500 6.500 9 12"],
  ["上一张", "M8 1L2.500 6.500 8 12"],
  ["下一张", "M2 1l5.500 5.500L2 12"],
  ["最后一张", "M9 1v11M1 1l5.500 5.500L1 12"],
];

function SheetTabs() {
  return (
    <div className="relative flex h-[22px] shrink-0 items-center bg-[#d7d7d7]">
      <div className="flex w-[118px] shrink-0 gap-4 pl-[14px]">
        {NAV.map(([label, d]) => (
          <button key={label} aria-label={label}><Ico w={10} h={13} color="#c2c2c2"><path d={d} /></Ico></button>
        ))}
      </div>
      <button className="h-[22px] w-[81px] shrink-0 border border-t-0 border-[#c0c0c0] bg-white pt-0.5 pl-0.5 text-xs font-bold text-[#45a94b]">报名统计</button>
      <button aria-label="新建工作表" className="ml-1.5"><Ico w={13} h={13}><path d="M6.500 0v13M0 6.500h13" /></Ico></button>

      <span className="ml-auto h-[10px] w-[3px] border-x border-[#a8a8a8]" />
      <div className="ml-1.5 flex h-[14px] w-[750px] shrink-0 items-center bg-[#cdcdcd]">
        <button aria-label="向左滚动" className="flex w-5 justify-center"><Ico w={4} h={6} color="none"><path d="M4 0v6L0 3z" fill="#707070" /></Ico></button>
        <div className="h-[14px] w-[662px] rounded-full border border-[#8f8f8f] bg-[#e8e8e8]" />
        <button aria-label="向右滚动" className="ml-auto mr-2"><Ico w={4} h={6} color="none"><path d="M0 0v6l4-3z" fill="#707070" /></Ico></button>
      </div>
      <span className="ml-[5px] mr-[23px] h-[10px] w-[3px] border-x border-[#a8a8a8]" />
    </div>
  );
}

function StatusBar() {
  return (
    <footer className="flex h-[26px] shrink-0 items-center bg-[#e8e8e8] text-xs text-[#444]">
      <button aria-label="录制宏" className="ml-[14px]">
        <Ico w={17} h={16}><path d="M1 1h9v7H1zM7 2l3 2.500L7 7M3.500 8v3M2.500 11.500h9v3.500H2V12zM10 4.500h5V8h-2v7h-2" /></Ico>
      </button>
      <div className="ml-auto flex items-center">
        <button aria-label="普通视图" className="flex h-[26px] w-[23px] items-center justify-center rounded bg-[#b8b8b8]">
          <Ico w={17} h={15}><rect x="1" y="1" width="15" height="13" rx="1" /><path d="M6 1v13M11 1v13M1 5.300h15M1 9.700h15" /></Ico>
        </button>
        <button aria-label="页面布局" className="ml-2">
          <Ico w={13}><path d="M1 1h8l3 3v11H1z" /><path d="M3.500 4.500h3v8h-3zM6.500 4.500H10v8H6.500" /></Ico>
        </button>
        <button aria-label="分页预览" className="ml-3">
          <Ico w={17} h={15}><path d="M1 4V1.500L1.500 1H5M8 1h2.500v6.500M1 7.500h10M10.500 10v1M16 1v11.500l-1.500 1.500H13M13 7.500h3M1 10v4h3.500M7 14h3" /></Ico>
        </button>
        <button aria-label="阅读模式" className="ml-2 flex items-center gap-[3px]">
          <Ico><path d="M5 1h6v14H5zM5 6H1v4h4M11 6h4v4h-4M5 6h6M5 10h6M8 6v4" /></Ico><Caret />
        </button>
        <button aria-label="护眼模式" className="ml-2">
          <Ico w={17}><path d="M1 10.500c4-6 11-6 15 0-4 6-11 6-15 0zM8.500 4V.5M4 4.500L2 2M13 4.500L15 2" /><circle cx="8.500" cy="10.500" r="2.500" /></Ico>
        </button>
        <span className="ml-[11px] h-6 w-px bg-[#d0d0d0]" />
        <button className="ml-[11px] flex items-center gap-[7px]">100%<Caret /></button>
        <button aria-label="缩小" className="ml-3"><Ico w={12} h={12}><path d="M0 6h12" strokeWidth="2" /></Ico></button>
        <input
          type="range"
          aria-label="显示比例"
          className="ml-[11px] h-3 w-[138px] appearance-none bg-[linear-gradient(90deg,#707070_50%,#b5b5b5_50%)] bg-[length:100%_1px] bg-center bg-no-repeat [&::-webkit-slider-thumb]:h-3 [&::-webkit-slider-thumb]:w-3 [&::-webkit-slider-thumb]:appearance-none [&::-webkit-slider-thumb]:rounded-full [&::-webkit-slider-thumb]:border [&::-webkit-slider-thumb]:border-[#555] [&::-webkit-slider-thumb]:bg-[#e8e8e8]"
        />
        <button aria-label="放大" className="ml-[10px] mr-4"><Ico w={12} h={12}><path d="M6 0v12M0 6h12" strokeWidth="2" /></Ico></button>
      </div>
    </footer>
  );
}

/* ─────────────────────────────────────────────
   OVERLAYS — red pointer and corner watermark
───────────────────────────────────────────── */
function Pointer() {
  return (
    <svg width="316" height="78" viewBox="0 0 316 78" className="pointer-events-none absolute left-[1146px] top-[299px] z-20" aria-hidden="true">
      <path d="M0 5l17-4-1 6 298 67.500v1L14 12l-1 4z" fill="#ed1c24" />
    </svg>
  );
}

function Watermark() {
  return (
    <svg width="360" height="170" viewBox="0 0 360 170" className="pointer-events-none absolute bottom-[44px] right-[94px] z-20 drop-shadow-[0_0_2px_rgba(0,0,0,0.35)]">
      <g fill="#fff" fillOpacity="0.96">
        <ellipse cx="139" cy="52" rx="13" ry="17" />
        <ellipse cx="163" cy="28" rx="12" ry="17" />
        <ellipse cx="194" cy="30" rx="13" ry="17" />
        <ellipse cx="213" cy="59" rx="13" ry="16" />
        <path d="M175 54c16 0 20 16 32 26 12 9 15 22 7 32-9 11-22 7-40 6-14 0-28 4-37-6-8-10-4-23 7-33 11-9 16-25 31-25z" />
        <text x="5" y="117" fontSize="78" fontWeight="bold" fontFamily="Liberation Sans, sans-serif" stroke="#fff" strokeWidth="2">Bai</text>
        <text x="145" y="108" fontSize="48" fontWeight="bold" fontFamily="Liberation Sans, sans-serif" stroke="#d2d2d2" strokeWidth="1.500">du</text>
        <text x="229" y="114" fontSize="58" fontWeight="900" fontFamily="Noto Sans CJK SC, sans-serif" stroke="#fff" strokeWidth="2">经验</text>
        <text x="7" y="163" fontSize="40" fontFamily="Noto Sans, sans-serif">jingyan.baidu.com</text>
      </g>
    </svg>
  );
}

export default function App() {
  return (
    <div className="relative flex h-screen flex-col overflow-hidden bg-[#d7d7d7] font-['Noto_Sans','Noto_Sans_CJK_SC',sans-serif] text-[#333]">
      <TitleBar />
      <MenuBar />
      <Ribbon />
      <FormulaBar />
      <main className="flex min-h-0 flex-1">
        <div className="min-w-0 flex-1"><Sheet /></div>
        <VerticalScroll />
      </main>
      <SheetTabs />
      <StatusBar />
      <Pointer />
      <Watermark />
    </div>
  );
}
